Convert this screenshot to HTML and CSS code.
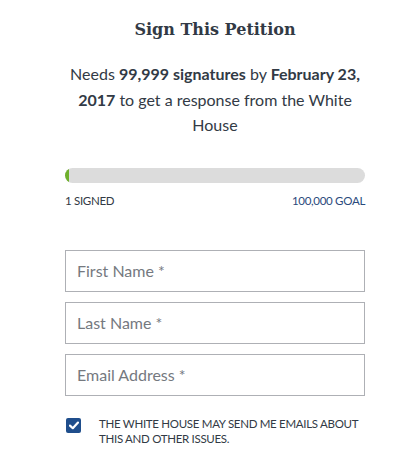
FILE: index.html
```html
<!DOCTYPE html>
<html lang="en">
<head>
  <meta charset="UTF-8" />
  <meta name="viewport" content="width=device-width, initial-scale=1" />
  <title>Sign This Petition</title>
  <link rel="stylesheet" href="styles.css">
</head>
<body>
  <div class="petition">
    <h2>Sign This Petition</h2>
    <p class="needs">Needs <strong>99,999 signatures</strong> by <strong>February 23, 2017</strong> to get a response from the White House</p>

    <div class="progress">
      <div class="progress-fill" style="width: 1%"></div>
    </div>
    <div class="progress-labels">
      <span class="signed">1 Signed</span>
      <span class="goal">100,000 Goal</span>
    </div>

    <form class="sign-form">
      <input type="text" placeholder="First Name *" />
      <input type="text" placeholder="Last Name *" />
      <input type="email" placeholder="Email Address *" />
      <label class="optin">
        <span class="checkbox">
          <svg width="10" height="9" viewBox="0 0 10 9"><path d="M1 4.6 L3.8 7.2 L9 1.6" fill="none" stroke="#fff" stroke-width="2.2" stroke-linecap="round" stroke-linejoin="round"/></svg>
        </span>
        <span class="optin-text">The White House may send me emails about this and other issues.</span>
      </label>
    </form>
  </div>
</body>
</html>
```

FILE: styles.css
```css
body {
  margin: 0;
  background: #fff;
  font-family: Lato, "Open Sans", sans-serif;
  color: #323a45;
}
.petition {
  width: 300px;
  margin-left: 65px;
  padding-top: 18px;
  text-align: center;
}
h2 {
  margin: 0;
  font-family: "DejaVu Serif", serif;
  font-size: 16px;
  font-weight: bold;
  color: #323a45;
  line-height: 24px;
}
.needs {
  margin: 19px 0 0;
  font-size: 16px;
  line-height: 25.5px;
  color: #323a45;
}
.needs strong {
  font-weight: bold;
}
.progress {
  margin-top: 30px;
  height: 15px;
  border-radius: 8px;
  background: #dcdcdc;
  overflow: hidden;
}
.progress-fill {
  height: 100%;
  min-width: 4px;
  background: #6fb02c;
  border-radius: 8px 0 0 8px;
}
.progress-labels {
  display: flex;
  justify-content: space-between;
  margin-top: 11px;
  font-size: 11.5px;
  letter-spacing: -0.3px;
  text-transform: uppercase;
  line-height: 14px;
}
.signed {
  color: #323a45;
}
.goal {
  color: #2b4a7c;
}
.sign-form {
  display: flex;
  flex-direction: column;
  gap: 10px;
  margin-top: 42px;
}
.sign-form input {
  height: 42px;
  box-sizing: border-box;
  border: 1px solid #aeb0b5;
  padding: 0 11px;
  font-family: Lato, "Open Sans", sans-serif;
  font-size: 16px;
  color: #323a45;
  margin: 0;
}
.sign-form input::placeholder {
  color: #75797f;
}
.optin {
  display: flex;
  align-items: flex-start;
  gap: 18px;
  margin-top: 10px;
  text-align: left;
}
.checkbox {
  flex: none;
  width: 15px;
  height: 15px;
  margin-top: 2px;
  margin-left: 1px;
  border-radius: 2px;
  background: #1f4e8c;
  display: flex;
  align-items: center;
  justify-content: center;
}
.optin-text {
  flex: 1;
  min-width: 0;
  font-size: 11.5px;
  letter-spacing: -0.3px;
  line-height: 15px;
  text-transform: uppercase;
  color: #323a45;
}
```
